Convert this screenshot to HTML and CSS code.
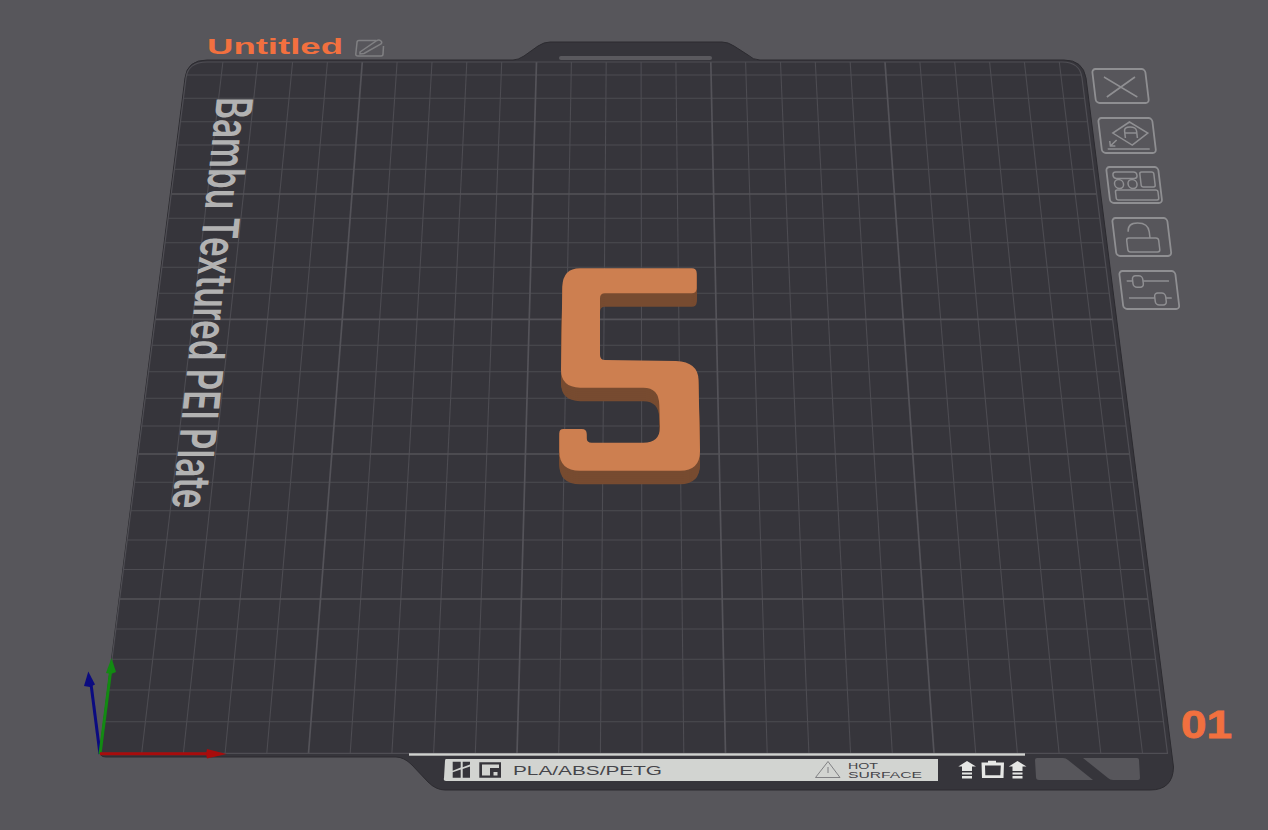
FILE: index.html
```html
<!DOCTYPE html>
<html lang="en">

<head>
    <meta charset="UTF-8">
    <meta name="viewport" content="width=device-width, initial-scale=1.0">
    <title>Untitled - Plate 01</title>
    <link rel="stylesheet" href="styles.css">
</head>

<body>
    <svg class="scene" viewBox="0 0 1268 830" width="1268" height="830">
        <defs>
            <path id="digit" d="M580 268.3H691.7Q696.7 268.3 696.7 273.3V288.3Q696.7 293.3 691.7 293.3H605Q600 293.3 600 298.3V355Q600 360 605 360L676 361Q698.3 362 698.5 380L700 451Q700 470.7 680 470.7H580Q559.3 470.7 559.3 451V433.3Q559.3 429 563.3 429H581.7Q586.7 429 586.7 434V438.3Q586.7 442.7 591.7 442.7H643.3Q660 442.7 660 426.7L659.3 405Q659 387.7 643.3 387.7H580Q561 387 561 370L562.3 286.7Q563 268.3 580 268.3Z" />
            <clipPath id="bed-clip">
                <path d="M207 62H1062Q1080 62 1082 78L1167.5 753.3H100L186 78Q188 62 207 62Z" />
            </clipPath>
        </defs>

        <!-- plate body with handle and bottom tab -->
        <path class="plate" d="M207 60H513Q518 60 524 56L538 46Q544 42 550 42H722Q728 42 734 46L748 55Q753 60 760 60H1064Q1083 60 1086 78L1173.5 767Q1173 790 1150 790H445Q436 790 428 782L412 765Q404 757 396 757H106Q99 757 100 750L185 78Q187 60 207 60Z" />
        <rect class="slot" x="559" y="56" width="153" height="4" rx="2" />

        <g clip-path="url(#bed-clip)">
            <g class="grid-minor">
                <line x1="222.9" y1="62" x2="141.7" y2="753.3" />
                <line x1="257.7" y1="62" x2="183.4" y2="753.3" />
                <line x1="292.6" y1="62" x2="225.1" y2="753.3" />
                <line x1="327.4" y1="62" x2="266.8" y2="753.3" />
                <line x1="397.1" y1="62" x2="350.2" y2="753.3" />
                <line x1="432" y1="62" x2="391.9" y2="753.3" />
                <line x1="466.8" y1="62" x2="433.6" y2="753.3" />
                <line x1="501.7" y1="62" x2="475.3" y2="753.3" />
                <line x1="571.4" y1="62" x2="558.7" y2="753.3" />
                <line x1="606.2" y1="62" x2="600.4" y2="753.3" />
                <line x1="641.1" y1="62" x2="642.1" y2="753.3" />
                <line x1="675.9" y1="62" x2="683.8" y2="753.3" />
                <line x1="745.6" y1="62" x2="767.2" y2="753.3" />
                <line x1="780.5" y1="62" x2="808.9" y2="753.3" />
                <line x1="815.3" y1="62" x2="850.6" y2="753.3" />
                <line x1="850.2" y1="62" x2="892.3" y2="753.3" />
                <line x1="919.9" y1="62" x2="975.7" y2="753.3" />
                <line x1="954.7" y1="62" x2="1017.4" y2="753.3" />
                <line x1="989.6" y1="62" x2="1059.1" y2="753.3" />
                <line x1="1024.4" y1="62" x2="1100.8" y2="753.3" />
                <line x1="1059.3" y1="62" x2="1142.5" y2="753.3" />
                <line x1="186.3" y1="75" x2="1081.6" y2="75" />
                <line x1="183.4" y1="98.3" x2="1084.6" y2="98.3" />
                <line x1="180.4" y1="121.7" x2="1087.5" y2="121.7" />
                <line x1="177.4" y1="145" x2="1090.5" y2="145" />
                <line x1="174.3" y1="169.3" x2="1093.6" y2="169.3" />
                <line x1="168.1" y1="218.3" x2="1099.8" y2="218.3" />
                <line x1="165" y1="242.7" x2="1102.9" y2="242.7" />
                <line x1="161.9" y1="267.3" x2="1106" y2="267.3" />
                <line x1="158.6" y1="293.3" x2="1109.3" y2="293.3" />
                <line x1="151.9" y1="345.3" x2="1115.8" y2="345.3" />
                <line x1="148.6" y1="371.7" x2="1119.2" y2="371.7" />
                <line x1="145.2" y1="398.3" x2="1122.6" y2="398.3" />
                <line x1="141.7" y1="426" x2="1126.1" y2="426" />
                <line x1="134.5" y1="482.3" x2="1133.2" y2="482.3" />
                <line x1="130.9" y1="510.7" x2="1136.8" y2="510.7" />
                <line x1="127.2" y1="540" x2="1140.5" y2="540" />
                <line x1="123.4" y1="569.5" x2="1144.2" y2="569.5" />
                <line x1="115.8" y1="629" x2="1151.8" y2="629" />
                <line x1="112" y1="659.3" x2="1155.6" y2="659.3" />
                <line x1="108" y1="690" x2="1159.5" y2="690" />
                <line x1="104" y1="721.7" x2="1163.5" y2="721.7" />
            </g>
            <g class="grid-major">
                <line x1="362.3" y1="62" x2="308.5" y2="753.3" />
                <line x1="536.5" y1="62" x2="517" y2="753.3" />
                <line x1="710.8" y1="62" x2="725.5" y2="753.3" />
                <line x1="885" y1="62" x2="934" y2="753.3" />
                <line x1="171.2" y1="194" x2="1096.7" y2="194" />
                <line x1="155.2" y1="319.3" x2="1112.6" y2="319.3" />
                <line x1="138.1" y1="454" x2="1129.6" y2="454" />
                <line x1="119.6" y1="599" x2="1148" y2="599" />
            </g>
        </g>
        <path class="bed-edge" d="M207 62H1062Q1080 62 1082 78L1167.5 753.3H100L186 78Q188 62 207 62Z" />

        <text class="plate-name" transform="matrix(-0.109 0.994 -1 0 217 97)" textLength="414" lengthAdjust="spacingAndGlyphs">Bambu Textured PEI Plate</text>

        <!-- the extruded part -->
        <g class="part-side">
            <use href="#digit" y="13.5" />
            <use href="#digit" y="12" />
            <use href="#digit" y="10" />
            <use href="#digit" y="8" />
            <use href="#digit" y="6" />
            <use href="#digit" y="4" />
            <use href="#digit" y="2" />
        </g>
        <use class="part-top" href="#digit" />

        <!-- title -->
        <text class="title" x="207" y="54" textLength="136" lengthAdjust="spacingAndGlyphs">Untitled</text>
        <g class="edit-icon">
            <path d="M376 40.5H359Q357 40.5 357 42.5L355.8 54Q355.6 56 358 56H381Q383 56 383 54L383.5 46" />
            <path d="M360 52L377 40.5Q379 39.5 381 41Q382.5 42.5 381 44L364 53.5L360 54Z" />
        </g>

        <!-- plate tools -->
        <g class="tool-line" transform="matrix(1 0 0.12 1 1092 69)">
            <rect width="53" height="34" rx="3.5" />
            <path class="thin" d="M11 8L42 28M42 8L11.5 28" />
        </g>
        <g class="tool-line" transform="matrix(1 0 0.12 1 1098 118)">
            <rect width="54" height="35" rx="3.5" />
            <g class="thin">
                <path d="M31 4L48 15L31 27L13 15Z" />
                <path d="M25 20V13Q25 9 31 9Q37 9 37 13V20M25 15H37" />
                <path d="M6 31H48M16 22L9 28M9 23V28H14" />
            </g>
        </g>
        <g class="tool-line" transform="matrix(1 0 0.12 1 1106 167)">
            <rect width="52" height="36" rx="3.5" />
            <g class="thin">
                <rect x="6" y="5" width="24" height="6.5" rx="3.2" />
                <rect x="33" y="5" width="14" height="15" rx="2" />
                <circle cx="11" cy="17" r="4.5" />
                <circle cx="24.5" cy="17" r="4.5" />
                <rect x="6.5" y="23" width="42.5" height="10" rx="2" />
            </g>
        </g>
        <g class="tool-line" transform="matrix(1 0 0.12 1 1112 218)">
            <rect width="55" height="38" rx="3.5" />
            <g class="thin">
                <rect x="12" y="20" width="32" height="14" rx="2.5" />
                <path d="M14.5 13.7Q15 5 25 5Q35.6 5 35.6 14V20" />
            </g>
        </g>
        <g class="tool-line" transform="matrix(1 0 0.12 1 1119 271)">
            <rect width="56" height="38" rx="3.5" />
            <g class="thin">
                <path d="M6.5 10H12.5M23 10H48.8M6.8 27H32.6M43.6 27H49.5" />
                <rect x="12.5" y="4.7" width="10.3" height="11.5" rx="3.5" />
                <rect x="32.6" y="22" width="11" height="12" rx="3.5" />
            </g>
        </g>

        <!-- label strip along the bottom -->
        <rect class="strip-line" x="409" y="753.3" width="616" height="2.4" />
        <path class="strip-panel" d="M446 759H938V781H446Q443 781 444 778L445 761Q445 759 446 759Z" />
        <path class="strip-dark" d="M452.7 761.7H460.7V767.5L452.7 770.7ZM462.7 761.7H470V764.5L462.7 767.3ZM452.7 777.7V772.3L460.7 769.5V777.7ZM462.7 777.7V769L470 766.5V777.7Z" />
        <path class="strip-dark" fill-rule="evenodd" d="M479.3 762.3H501V777.7H479.3ZM482 764.5V775.5H490V768H499V764.5ZM493.5 772V775.5H497.5V772Z" />
        <text class="strip-text" x="513" y="774.5" textLength="149" lengthAdjust="spacingAndGlyphs">PLA/ABS/PETG</text>
        <path class="warn" d="M828 761.5L840 777.5H815.5ZM828 767V773" />
        <text class="strip-text small" x="848" y="769" textLength="30" lengthAdjust="spacingAndGlyphs">HOT</text>
        <text class="strip-text small" x="848" y="778" textLength="74" lengthAdjust="spacingAndGlyphs">SURFACE</text>

        <g class="strip-white">
            <path d="M967 761L976 766.5H972V771H962V766.5H958.3Z" />
            <path d="M962 772.5H972V774.5H962ZM962 776H972V778.5H962Z" />
            <path d="M1017.5 761L1026.5 766.5H1022.5V771H1012.5V766.5H1008.8Z" />
            <path d="M1012.5 772.5H1022.5V774.5H1012.5ZM1012.5 776H1022.5V778.5H1012.5Z" />
            <path fill-rule="evenodd" d="M981.5 762.5H988V760.8H996V762.5H1004L1003.5 778H982ZM985 765.5L985.3 775.2H1000.3L1000.8 765.5Z" />
        </g>

        <path class="cutout" d="M1037 758H1063Q1066 758 1068 760L1093 780H1039Q1036 780 1036 777L1035 760Q1035 758 1037 758Z" />
        <path class="cutout" d="M1083 758H1137Q1139 758 1139 760L1140 778Q1140 780 1138 780H1113Q1110 780 1108 778Z" />

        <text class="plate-number" x="1181" y="738" textLength="51" lengthAdjust="spacingAndGlyphs">01</text>

        <!-- axes -->
        <g>
            <line class="axis-shaft z" x1="100" y1="754" x2="91" y2="684" />
            <path class="axis-head z" d="M88.3 671.5L95 684.5L90 687L84 686Z" />
            <line class="axis-shaft y" x1="100" y1="754" x2="110.5" y2="672" />
            <path class="axis-head y" d="M111.5 658L116 672L111 674L106 673Z" />
            <line class="axis-shaft x" x1="100" y1="753.7" x2="208" y2="753.7" />
            <path class="axis-head x" d="M226.5 754L207 749L206 754L207 758.5Z" />
        </g>
    </svg>
</body>

</html>
```

FILE: styles.css
```css
body {
    margin: 0;
    background-color: #57565b;
}

.scene {
    display: block;
}

.plate {
    fill: #36353b;
    stroke: #2c2b30;
    stroke-width: 1;
}

.slot {
    fill: #5a595e;
}

.grid-minor line {
    stroke: #4d4c52;
    stroke-width: 1.1;
}

.grid-major line {
    stroke: #545359;
    stroke-width: 1.7;
}

.bed-edge {
    fill: none;
    stroke: #4f4e54;
    stroke-width: 1.2;
}

.plate-name {
    font-family: "Inter", sans-serif;
    font-weight: 600;
    font-size: 50px;
    fill: #b2b2b2;
}

.part-side {
    fill: #774b30;
}

.part-top {
    fill: #cd7f50;
}

.title {
    font-family: "Liberation Sans", sans-serif;
    font-weight: 700;
    font-size: 22px;
    fill: #f2703f;
}

.plate-number {
    font-family: "Liberation Sans", sans-serif;
    font-weight: 700;
    font-size: 38px;
    fill: #f2703f;
    stroke: #f2703f;
    stroke-width: 0.8;
}

.edit-icon {
    fill: none;
    stroke: #808083;
    stroke-width: 1.5;
}

.tool-line {
    fill: none;
    stroke: #8f8f92;
    stroke-width: 1.8;
}

.tool-line .thin {
    stroke-width: 1.5;
}

.strip-line {
    fill: #d0d2cf;
}

.strip-panel {
    fill: #d2d4d1;
}

.strip-dark {
    fill: #36353b;
}

.strip-text {
    font-family: "Liberation Sans", sans-serif;
    font-size: 12.5px;
    fill: #45454a;
}

.strip-text.small {
    font-size: 9.5px;
}

.warn {
    fill: none;
    stroke: #77777a;
    stroke-width: 0.9;
}

.strip-white {
    fill: #e6e7e5;
}

.cutout {
    fill: #57565b;
}

.axis-shaft {
    stroke-width: 3;
}

.axis-shaft.x {
    stroke: #a80c0c;
}

.axis-shaft.y {
    stroke: #128a12;
}

.axis-shaft.z {
    stroke: #0b0b80;
}

.axis-head.x {
    fill: #a80c0c;
}

.axis-head.y {
    fill: #128a12;
}

.axis-head.z {
    fill: #0b0b80;
}
```
